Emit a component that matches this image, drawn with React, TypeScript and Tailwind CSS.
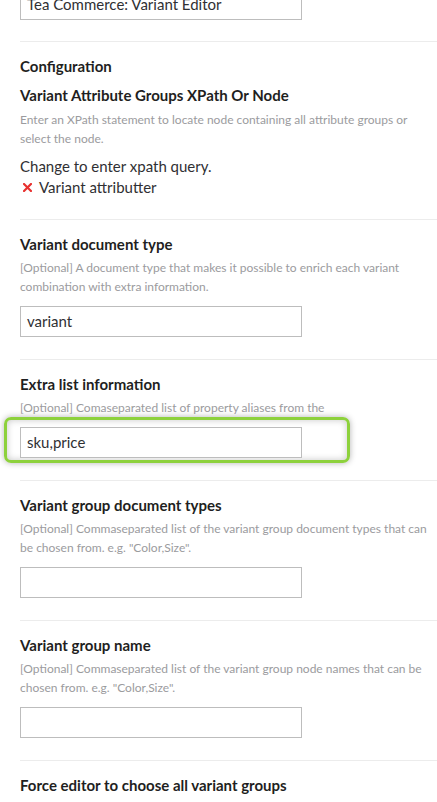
import React from 'react';

interface FieldProps {
    label: string;
    desc: string[];
    value?: string;
    highlight?: boolean;
}

const TextBox: React.FC<{ value?: string; highlight?: boolean }> = ({ value, highlight }) => {
    return (
        <div className="relative mt-[10px] w-[282px]">
            {highlight && (
                <span className="absolute -left-[16px] -top-[10px] h-[46px] w-[346px] rounded-[7px] border-[3px] border-[#8dd13c] shadow-[0_0_6px_rgba(0,0,0,0.3),inset_0_0_7px_rgba(0,0,0,0.22)]" />
            )}
            <div className="relative h-[31px] border border-[#bdbdbd] bg-white pl-[6px] text-[15px] leading-[29px] text-[#303033]">
                {value}
            </div>
        </div>
    );
};

const Field: React.FC<FieldProps> = ({ label, desc, value, highlight }) => {
    return (
        <div className="border-t border-[#ececec] pt-[14px] pb-[22px]">
            <p className="text-[15px] font-bold leading-[20px] text-[#1f1f22]">{label}</p>
            <p className="mt-[4px] text-[12px] leading-[19px] text-[#9b9b9e]">
                {desc.map((line, i) => (
                    <span key={i} className="block whitespace-nowrap">{line}</span>
                ))}
            </p>
            <TextBox value={value} highlight={highlight} />
        </div>
    );
};

export default function App() {
    return (
        <div className="h-[802px] w-[437px] overflow-hidden bg-white pl-[20px] font-['Lato',sans-serif]">
            {/* name field, cut by the top edge */}
            <div className="-mt-[11px] mb-[21px] h-[31px] w-[282px] border border-[#bdbdbd] pl-[6px] text-[15px] leading-[29px] text-[#303033]">
                Tea Commerce: Variant Editor
            </div>

            <div className="border-t border-[#ececec] pt-[14px] pb-[21px]">
                <p className="text-[15px] font-bold leading-[20px] text-[#1f1f22]">Configuration</p>
                <p className="mt-[9px] text-[15px] font-bold leading-[20px] text-[#1f1f22]">
                    Variant Attribute Groups XPath Or Node
                </p>
                <p className="mt-[5px] text-[12px] leading-[19px] text-[#9b9b9e]">
                    <span className="block whitespace-nowrap">Enter an XPath statement to locate node containing all attribute groups or</span>
                    <span className="block">select the node.</span>
                </p>
                <p className="mt-[8px] text-[15px] leading-[21px] text-[#303033]">Change to enter xpath query.</p>
                <div className="flex items-center text-[15px] leading-[21px] text-[#303033]">
                    <svg width="9" height="9" viewBox="0 0 9 9" className="ml-[3px] mr-[7px]">
                        <path d="M1 1 L8 8 M8 1 L1 8" stroke="#e8312f" strokeWidth="2.2" strokeLinecap="square" />
                    </svg>
                    <span>Variant attributter</span>
                </div>
            </div>

            <Field
                label="Variant document type"
                desc={['[Optional] A document type that makes it possible to enrich each variant', 'combination with extra information.']}
                value="variant"
            />
            <Field
                label="Extra list information"
                desc={['[Optional] Comaseparated list of property aliases from the']}
                value="sku,price"
                highlight
            />
            <Field
                label="Variant group document types"
                desc={['[Optional] Commaseparated list of the variant group document types that can', 'be chosen from. e.g. "Color,Size".']}
            />
            <Field
                label="Variant group name"
                desc={['[Optional] Commaseparated list of the variant group node names that can be', 'chosen from. e.g. "Color,Size".']}
            />

            <div className="border-t border-[#ececec] pt-[14px]">
                <p className="text-[15px] font-bold leading-[20px] text-[#1f1f22]">Force editor to choose all variant groups</p>
            </div>
        </div>
    );
}
